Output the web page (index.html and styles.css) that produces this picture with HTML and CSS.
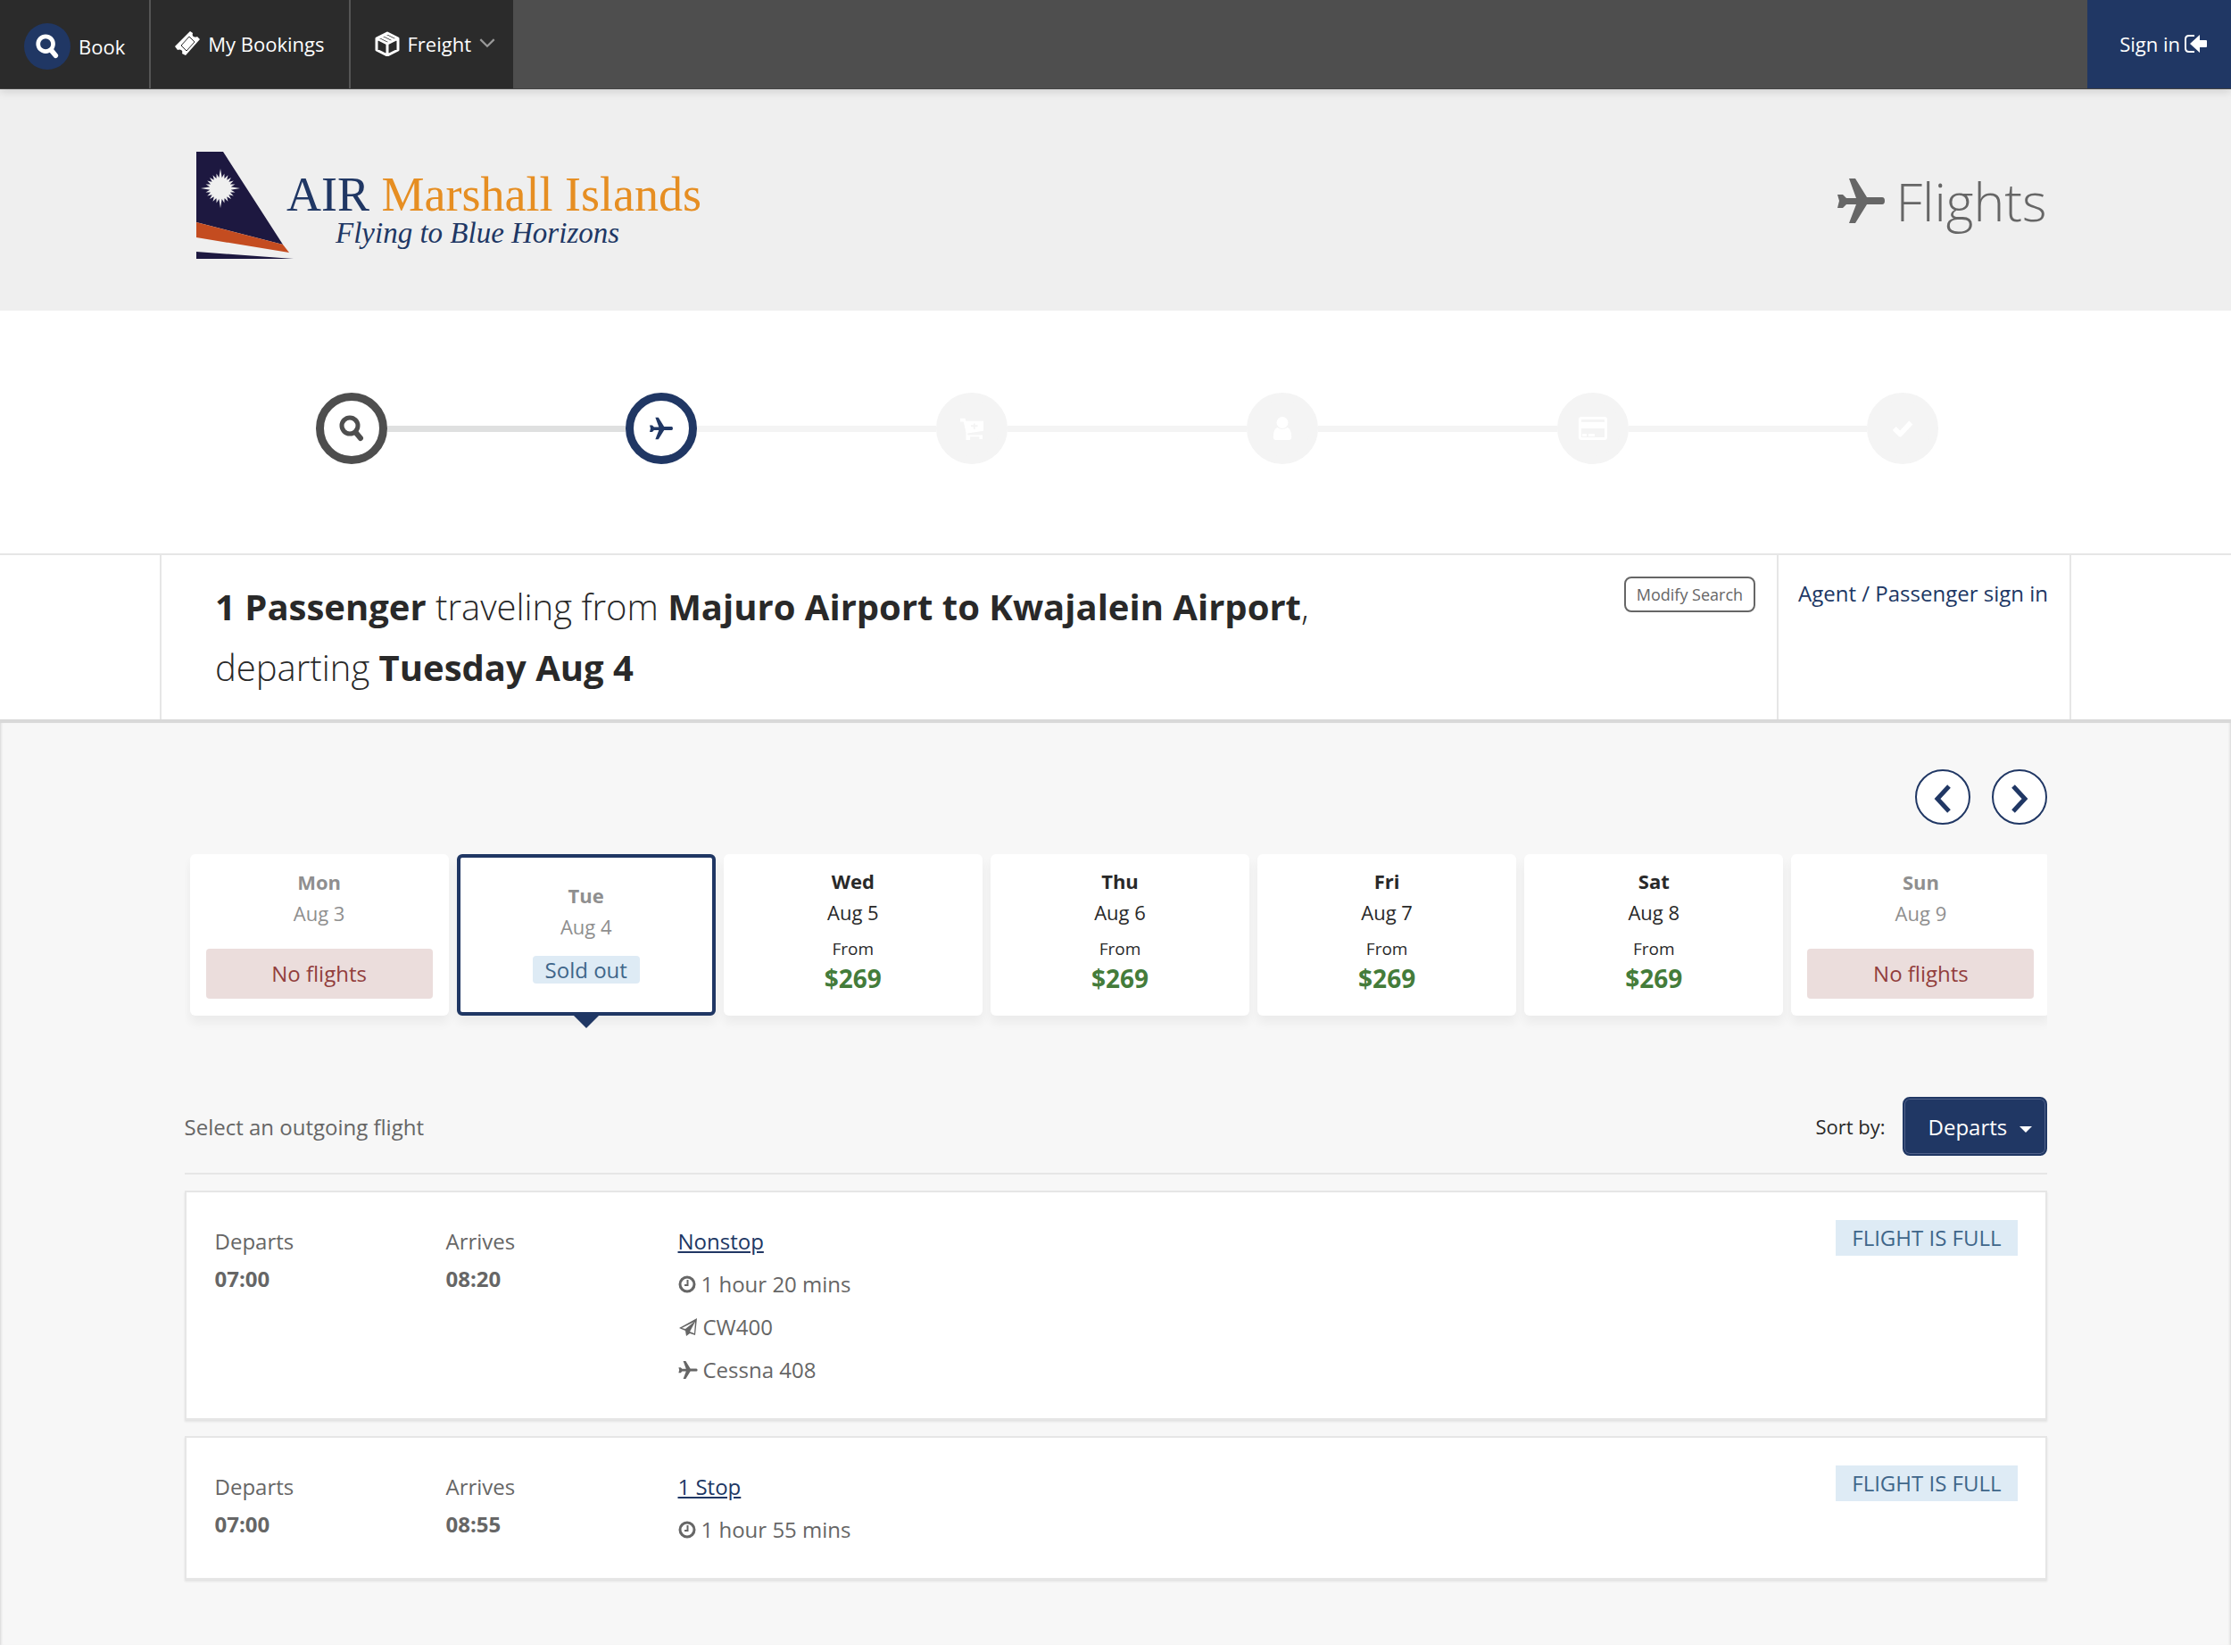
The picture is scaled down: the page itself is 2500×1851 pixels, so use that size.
FILE: index.html
```
<!DOCTYPE html>
<html lang="en">
<head>
    <meta charset="UTF-8">
    <meta name="viewport" content="width=device-width, initial-scale=1.0">
    <title>Flights - Air Marshall Islands</title>
    <link rel="stylesheet" href="styles.css">
</head>
<body>
    <!-- Shared icons -->
    <svg class="sprite" aria-hidden="true">
        <symbol id="icon-search" viewBox="0 0 28 30">
            <circle cx="12" cy="12" r="9" fill="none" stroke="currentColor" stroke-width="5"/>
            <path d="M19 20l5 6" stroke="currentColor" stroke-width="6" stroke-linecap="round"/>
        </symbol>
        <symbol id="icon-plane" viewBox="0 0 53 50">
            <path fill="currentColor" d="M0 18h6l4 4h11L13 0h7l13 21h17q3 0 3 4t-3 4H33L20 50h-7l8-21H10l-4 4H0l2-8z"/>
        </symbol>
        <symbol id="icon-clock" viewBox="0 0 20 20">
            <circle cx="10" cy="10" r="8" fill="none" stroke="currentColor" stroke-width="3"/>
            <path d="M10.500 5v6H7" fill="none" stroke="currentColor" stroke-width="2"/>
        </symbol>
        <symbol id="icon-send" viewBox="0 0 22 20">
            <path fill="currentColor" fill-rule="evenodd" d="M21 0l-2 19-6-2-4 3-1-6-7-3zM18 4L4 11l4 1zM19 4L13 15l5 2z"/>
        </symbol>
    </svg>

    <nav class="navbar">
        <a href="#" class="nav-item nav-book">
            <span class="nav-circle"><svg class="icon-28"><use href="#icon-search"/></svg></span>
            Book
        </a>
        <a href="#" class="nav-item">
            <svg class="icon-28" viewBox="0 0 28 28">
                <path fill="#fff" d="M17 0l3 2q-1 3 1 4t4 0l3 3-16 18-4-2q1-3-1-4t-4 0l-3-4z"/>
                <path fill="none" stroke="#2b2b2b" d="M16 6l6 6-9 10-6-6z"/>
            </svg>
            My Bookings
        </a>
        <a href="#" class="nav-item nav-freight">
            <svg class="icon-28" viewBox="0 0 28 28">
                <path fill="none" stroke="#fff" stroke-width="3" stroke-linejoin="round" d="M14 2l12 6v13l-12 6-12-6V8zM2 8l12 6 12-6M14 14v13M6 6l12 6M10 4l12 6"/>
            </svg>
            Freight
            <svg class="chevron" viewBox="0 0 16 10"><path d="M1 1l7 7 7-7" fill="none" stroke="#999" stroke-width="2"/></svg>
        </a>
        <a href="#" class="sign-in">
            Sign in
            <svg class="sign-in-icon" viewBox="0 0 26 20">
                <path d="M11 1H5Q1 1 1 5v10q0 4 4 4h6" fill="none" stroke="#fff" stroke-width="2"/>
                <path d="M6 10l11-10v6h7q1 0 1 1v6q0 1-1 1h-7v6z" fill="#fff"/>
            </svg>
        </a>
    </nav>

    <header class="header">
        <div class="container header-inner">
            <a href="#" class="logo" aria-label="Air Marshall Islands">
                <svg class="logo-image" viewBox="0 0 570 122">
                    <path fill="#1d1840" d="M1 0h30l67 104L1 79zM1 112l109 8H1z"/>
                    <path fill="#c44c20" d="M1 79l97 25 7 9L1 96z"/>
                    <g id="sun" fill="#efefef">
                        <circle cx="28" cy="41" r="12"/>
                        <g id="rays">
                            <path d="M26 31l2-12 2 12z"/>
                            <path id="ray" d="M26 31l2-7 2 7z" transform="rotate(15 28 41)"/>
                            <use href="#ray" transform="rotate(15 28 41)"/>
                            <use href="#ray" transform="rotate(30 28 41)"/>
                            <use href="#ray" transform="rotate(45 28 41)"/>
                            <use href="#ray" transform="rotate(60 28 41)"/>
                        </g>
                        <use href="#rays" transform="rotate(90 28 41)"/>
                        <use href="#rays" transform="rotate(180 28 41)"/>
                        <use href="#rays" transform="rotate(270 28 41)"/>
                    </g>
                    <text x="102" y="66" class="logo-name">AIR <tspan class="logo-accent">Marshall Islands</tspan></text>
                    <text x="157" y="102" class="logo-tagline">Flying to Blue Horizons</text>
                </svg>
            </a>
            <h1 class="page-title"><svg class="title-plane"><use href="#icon-plane"/></svg>Flights</h1>
        </div>
    </header>

    <div class="container">
        <div class="steps">
            <span class="step step-done"><svg class="step-search"><use href="#icon-search"/></svg></span>
            <span class="step-line step-line-done"></span>
            <span class="step step-current"><svg class="step-icon"><use href="#icon-plane"/></svg></span>
            <span class="step-line"></span>
            <span class="step">
                <svg class="step-icon" viewBox="0 0 28 28">
                    <path fill="#fff" d="M0 2h6l1 3h21v12l-19 3v2h18v5h-4v-3H12v4H7v-9L4 6H0z"/>
                    <path d="M17 8v7M13 11h8" stroke="#f4f4f4" stroke-width="2"/>
                </svg>
            </span>
            <span class="step-line"></span>
            <span class="step">
                <svg class="step-icon" viewBox="0 0 28 28">
                    <circle cx="14" cy="7" r="7" fill="#fff"/>
                    <path fill="#fff" d="M8 13q6 4 12 0 5 2 5 11 0 4-3 4H6q-3 0-3-4 0-9 5-11z"/>
                </svg>
            </span>
            <span class="step-line"></span>
            <span class="step">
                <svg class="step-icon step-card" viewBox="0 0 32 26">
                    <path fill="#fff" fill-rule="evenodd" d="M3 0h26q3 0 3 3v20q0 3-3 3H3q-3 0-3-3V3q0-3 3-3zM3 3v3h26V3zM3 13v10h26V13z"/>
                    <path fill="#fff" d="M4 19h5v3H4zM11 19h7v3h-7z"/>
                </svg>
            </span>
            <span class="step-line"></span>
            <span class="step">
                <svg class="step-icon" viewBox="0 0 28 28"><path d="M4 14l7 7L24 7" fill="none" stroke="#fff" stroke-width="6" stroke-linejoin="round"/></svg>
            </span>
        </div>
    </div>

    <section class="summary">
        <div class="summary-inner">
            <p class="summary-text">
                <strong>1 Passenger</strong> traveling from <strong>Majuro Airport to Kwajalein Airport</strong>,<br>
                departing <strong>Tuesday Aug 4</strong>
            </p>
            <button type="button" class="modify-button">Modify Search</button>
            <div class="summary-side"><a href="#">Agent / Passenger sign in</a></div>
        </div>
    </section>

    <main class="results">
        <div class="container">
            <div class="pager">
                <button type="button" class="pager-button" aria-label="Previous week">
                    <svg class="pager-icon" viewBox="0 0 20 32"><path d="M17 2L4 16l13 14"/></svg>
                </button>
                <button type="button" class="pager-button" aria-label="Next week">
                    <svg class="pager-icon" viewBox="0 0 20 32"><path d="M3 2l13 14L3 30"/></svg>
                </button>
            </div>

            <div class="days">
                <div class="days-track">
                    <button type="button" class="day day-empty">
                        <strong>Mon</strong>
                        <span>Aug 3</span>
                        <span class="no-flights">No flights</span>
                    </button>
                    <button type="button" class="day day-selected">
                        <strong>Tue</strong>
                        <span>Aug 4</span>
                        <span class="sold-out">Sold out</span>
                    </button>
                    <button type="button" class="day">
                        <strong>Wed</strong>
                        <span>Aug 5</span>
                        <span class="from">From</span>
                        <strong class="price">$269</strong>
                    </button>
                    <button type="button" class="day">
                        <strong>Thu</strong>
                        <span>Aug 6</span>
                        <span class="from">From</span>
                        <strong class="price">$269</strong>
                    </button>
                    <button type="button" class="day">
                        <strong>Fri</strong>
                        <span>Aug 7</span>
                        <span class="from">From</span>
                        <strong class="price">$269</strong>
                    </button>
                    <button type="button" class="day">
                        <strong>Sat</strong>
                        <span>Aug 8</span>
                        <span class="from">From</span>
                        <strong class="price">$269</strong>
                    </button>
                    <button type="button" class="day day-empty">
                        <strong>Sun</strong>
                        <span>Aug 9</span>
                        <span class="no-flights">No flights</span>
                    </button>
                </div>
            </div>

            <div class="toolbar">
                <h2 class="toolbar-title">Select an outgoing flight</h2>
                <label for="sort" class="sort-label">Sort by:</label>
                <div class="sort">
                    <select id="sort" class="sort-select">
                        <option>Departs</option>
                        <option>Arrives</option>
                        <option>Price</option>
                    </select>
                    <span class="caret"></span>
                </div>
            </div>

            <article class="flight">
                <div class="flight-time">
                    <div>Departs</div>
                    <strong>07:00</strong>
                </div>
                <div class="flight-time">
                    <div>Arrives</div>
                    <strong>08:20</strong>
                </div>
                <div class="flight-details">
                    <a href="#">Nonstop</a>
                    <div class="detail"><svg class="icon-20"><use href="#icon-clock"/></svg>1 hour 20 mins</div>
                    <div class="detail"><svg class="icon-22"><use href="#icon-send"/></svg>CW400</div>
                    <div class="detail"><svg class="icon-22"><use href="#icon-plane"/></svg>Cessna 408</div>
                </div>
                <span class="full-badge">FLIGHT IS FULL</span>
            </article>

            <article class="flight">
                <div class="flight-time">
                    <div>Departs</div>
                    <strong>07:00</strong>
                </div>
                <div class="flight-time">
                    <div>Arrives</div>
                    <strong>08:55</strong>
                </div>
                <div class="flight-details">
                    <a href="#">1 Stop</a>
                    <div class="detail"><svg class="icon-20"><use href="#icon-clock"/></svg>1 hour 55 mins</div>
                </div>
                <span class="full-badge">FLIGHT IS FULL</span>
            </article>
        </div>
    </main>
</body>
</html>
```
FILE: styles.css
```
* {
    box-sizing: border-box;
}

body {
    margin: 0;
    background: white;
    color: #292929;
    font-family: "Open Sans", sans-serif;
    font-size: 24px;
}

a {
    color: #203764;
    text-decoration: none;
}

button, select {
    font-family: inherit;
    cursor: pointer;
}

.sprite {
    display: none;
}

.container {
    max-width: 2087px;
    margin: 0 auto;
}

/* Icon sizes */
.icon-28 {
    width: 28px;
    height: 28px;
}

.icon-22 {
    width: 22px;
    height: 20px;
}

.icon-20 {
    width: 20px;
    height: 20px;
}

/* Top navigation */
.navbar {
    position: relative;
    display: flex;
    height: 100px;
    background: #4e4e4e;
    border-bottom: 1px solid #444;
    box-shadow: 0 2px 10px rgba(0, 0, 0, 0.15);
    font-size: 22px;
}

.navbar a {
    padding-bottom: 2px;
    color: white;
}

.nav-item {
    display: flex;
    align-items: center;
    gap: 9px;
    padding: 0 27px;
    background: #2b2b2b;
    border-right: 2px solid #555;
}

.nav-book {
    padding-top: 7px;
}

.nav-circle {
    display: flex;
    align-items: center;
    justify-content: center;
    width: 52px;
    height: 52px;
    border-radius: 50%;
    background: #203764;
}

.nav-freight {
    padding-right: 20px;
    border-right: none;
}

.chevron {
    width: 18px;
    height: 11px;
}

.sign-in {
    display: flex;
    align-items: center;
    gap: 5px;
    margin-left: auto;
    padding: 0 26px 0 36px;
    background: #203764;
}

.sign-in-icon {
    width: 26px;
    height: 20px;
}

/* Header */
.header {
    background: #efefef;
    padding: 32px 0;
}

.header-inner {
    display: flex;
    justify-content: space-between;
    align-items: center;
    height: 184px;
}

.logo {
    padding: 14px 0 0 12px;
}

.logo-image {
    display: block;
    width: 570px;
    height: 122px;
}

.logo-name {
    font-family: "Liberation Serif", serif;
    font-size: 54px;
    fill: #203764;
}

.logo-accent {
    fill: #e68e22;
}

.logo-tagline {
    font-family: "Liberation Serif", serif;
    font-size: 33px;
    font-style: italic;
    fill: #203764;
}

.page-title {
    display: flex;
    align-items: center;
    gap: 12px;
    margin: 0;
    padding-top: 2px;
    color: #666;
    font-size: 59px;
    font-weight: 300;
}

.title-plane {
    width: 53px;
    height: 50px;
}

/* Booking steps */
.steps {
    display: flex;
    align-items: center;
    padding: 92px 121px 100px 147px;
}

.step {
    display: flex;
    align-items: center;
    justify-content: center;
    width: 80px;
    height: 80px;
    border: 9px solid #f4f4f4;
    border-radius: 50%;
    background: #f4f4f4;
}

.step-done {
    border-color: #4e4e4e;
    background: white;
    color: #4e4e4e;
}

.step-current {
    border-color: #203764;
    background: white;
    color: #203764;
}

.step-icon {
    width: 26px;
    height: 26px;
}

.step-search {
    width: 30px;
    height: 30px;
}

.step-card {
    width: 32px;
}

.step-line {
    flex: 1;
    height: 7px;
    background: #f4f4f4;
}

.step-line-done {
    background: #dfe0e0;
}

/* Search summary */
.summary {
    border-top: 2px solid #e6e6e6;
    border-bottom: 4px solid #d9d9d9;
}

.summary-inner {
    display: flex;
    align-items: flex-start;
    max-width: 2142px;
    margin: 0 auto;
    border-left: 2px solid #e6e6e6;
    border-right: 2px solid #e6e6e6;
}

.summary-text {
    flex: 1;
    margin: 0;
    padding: 24px 0 24px 60px;
    font-size: 40px;
    font-weight: 300;
    line-height: 68px;
}

.summary-text strong {
    font-weight: 700;
}

.modify-button {
    height: 40px;
    margin: 24px 24px 0 0;
    padding: 0 12px;
    background: white;
    border: 2px solid #666;
    border-radius: 8px;
    color: #666;
    font-size: 18px;
}

.summary-side {
    align-self: stretch;
    padding: 26px 24px 0 22px;
    border-left: 2px solid #e6e6e6;
}

/* Results */
.results {
    padding: 52px 0 73px;
    background: #f7f7f7;
    box-shadow: inset 3px 0 3px -2px #d4d4d4, inset -3px 0 3px -2px #d4d4d4;
}

.pager {
    display: flex;
    justify-content: flex-end;
    gap: 24px;
    margin-bottom: 33px;
}

.pager-button {
    display: flex;
    align-items: center;
    justify-content: center;
    width: 62px;
    height: 62px;
    padding: 4px 0 0;
    background: white;
    border: 2px solid #203764;
    border-radius: 50%;
}

.pager-icon {
    width: 20px;
    height: 32px;
    fill: none;
    stroke: #203764;
    stroke-width: 5px;
}

/* Day picker, the last card runs under the right edge */
.days {
    overflow: hidden;
    padding: 0 0 43px 6px;
    margin-bottom: 48px;
}

.days-track {
    display: grid;
    grid-template-columns: repeat(7, 1fr);
    gap: 9px;
    margin-right: -4px;
}

.day {
    position: relative;
    display: flex;
    flex-direction: column;
    align-items: center;
    height: 181px;
    padding: 13px 18px 0;
    background: white;
    border: none;
    border-radius: 6px;
    box-shadow: 0 8px 12px rgba(0, 0, 0, 0.05);
    color: #292929;
    font-size: 22px;
    line-height: 35px;
}

.day-empty {
    padding-top: 14px;
    color: #8f8f8f;
}

.day-selected {
    padding-top: 25px;
    border: 4px solid #203764;
    color: #8f8f8f;
}

.day-selected::after {
    content: "";
    position: absolute;
    top: 100%;
    left: 50%;
    margin: 4px 0 0 -14px;
    border: 14px solid transparent;
    border-top-color: #203764;
    border-bottom: none;
}

.no-flights {
    align-self: stretch;
    margin-top: 22px;
    border-radius: 4px;
    background: #ebdddc;
    color: #923e3c;
    font-size: 24px;
    line-height: 56px;
}

.sold-out {
    margin-top: 15px;
    padding: 0 14px;
    border-radius: 4px;
    background: #deebf5;
    color: #3f668a;
    font-size: 24px;
    line-height: 31px;
}

.from {
    margin-top: 8px;
    font-size: 19px;
    line-height: 30px;
}

.price {
    color: #447c3a;
    font-size: 28px;
    line-height: 36px;
}

/* Toolbar */
.toolbar {
    display: flex;
    align-items: center;
    padding-bottom: 19px;
    margin-bottom: 18px;
    border-bottom: 2px solid #e6e6e6;
}

.toolbar-title {
    flex: 1;
    margin: 0;
    color: #666;
    font-size: 24px;
    font-weight: 400;
}

.sort-label {
    margin-right: 19px;
    font-size: 22px;
}

.sort {
    position: relative;
}

.sort-select {
    appearance: none;
    display: block;
    height: 66px;
    padding: 0 42px 0 27px;
    background: #203764;
    border: 2px solid #203764;
    border-radius: 8px;
    box-shadow: inset 0 0 0 1px #50628a;
    color: white;
    font-size: 24px;
}

.caret {
    position: absolute;
    top: 33px;
    right: 17px;
    border: 7px solid transparent;
    border-top-color: white;
    border-bottom: none;
    pointer-events: none;
}

/* Flight cards */
.flight {
    display: grid;
    grid-template-columns: 259px 260px 1fr auto;
    align-items: start;
    margin-bottom: 18px;
    padding: 31px 31px 30px 32px;
    background: white;
    border: 2px solid #e6e6e6;
    box-shadow: 0 2px 2px #e2e2e2;
    color: #666;
}

.flight:last-child {
    margin-bottom: 0;
}

.flight-time {
    padding-top: 3px;
    line-height: 42px;
}

.flight-details {
    line-height: 48px;
}

.flight-details a {
    text-decoration: underline;
}

.detail {
    display: flex;
    align-items: center;
    gap: 6px;
}

.full-badge {
    padding: 0 18px;
    background: #deebf5;
    color: #3f668a;
    line-height: 40px;
}
```
